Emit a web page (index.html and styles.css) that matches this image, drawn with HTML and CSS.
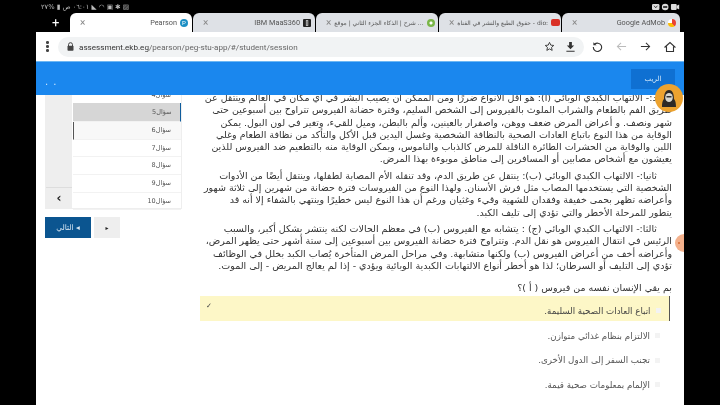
FILE: index.html
```html
<!DOCTYPE html>
<html lang="ar">
<head>
<meta charset="utf-8">
<title>Pearson</title>
<link rel="stylesheet" href="styles.css">
</head>
<body>
<div class="screen">
  <div class="statusbar">
    <span class="status-left">٠٦:٠١ ص ▮ %٢٧ ◣ ◠ ▣ ✱ ▨</span>
    <span class="status-right">
      <svg width="28" height="8" viewBox="0 0 34 9"><rect x="0" y="1" width="9" height="7" rx="1.500" fill="#ddd"/><path d="M2.500 3l2 2.500 2-2.500" fill="none" stroke="#222"/><circle cx="16" cy="4.500" r="4" fill="#ddd"/><rect x="13.500" y="3.500" width="5" height="2" fill="#222"/><rect x="23" y="1" width="7" height="7" rx="1" fill="#ddd"/><path d="M30 3l3-1.500v6l-3-1.500z" fill="#ddd"/></svg>
    </span>
  </div>
  <div class="tabstrip">
    <span class="newtab">+</span>
    <div class="tab tab-active">
      <span class="tab-x">×</span>
      <span class="tab-title">Pearson</span>
      <span class="fav fav-p">P</span>
    </div>
    <div class="tab">
      <span class="tab-x">×</span>
      <span class="tab-title">IBM MaaS360</span>
      <span class="fav fav-ibm">[]</span>
    </div>
    <div class="tab">
      <span class="tab-x">×</span>
      <span class="tab-title tab-ar">شرح | الذكاء الجزء الثاني | موقع ...</span>
      <span class="fav fav-green"></span>
    </div>
    <div class="tab">
      <span class="tab-x">×</span>
      <span class="tab-title tab-ar">حقوق الطبع والنشر في القناة - dio:</span>
      <span class="fav fav-yt"></span>
    </div>
    <div class="tab tab-last">
      <span class="tab-x">×</span>
      <span class="tab-title">Google AdMob</span>
      <span class="fav fav-admob"></span>
    </div>
  </div>
  <div class="frame">
    <div class="toolbar">
      <span class="menu-dots"><i></i><i></i><i></i></span>
      <div class="omnibox">
        <svg class="lock" width="7" height="9" viewBox="0 0 7 9"><path d="M1.500 4V2.700a2 2 0 0 1 4 0V4" fill="none" stroke="#444" stroke-width="1"/><rect x="0.500" y="3.800" width="6" height="5" rx="0.800" fill="#444"/></svg>
        <span class="url"><b>assessment.ekb.eg</b>/pearson/peg-stu-app/#/student/session</span>
        <svg class="omni-icon" width="11" height="11" viewBox="0 0 24 24"><path d="M12 3l2.800 6 6.500.7-4.900 4.400 1.400 6.400L12 17.200 6.200 20.500l1.400-6.400L2.700 9.700 9.200 9z" fill="none" stroke="#333" stroke-width="2"/></svg>
        <svg class="omni-icon" width="11" height="11" viewBox="0 0 24 24"><path d="M9 2h6v8h5l-8 8-8-8h5zM3 21h18v2.500H3z" fill="#333"/></svg>
      </div>
      <svg class="tool reload" width="11" height="11" viewBox="0 0 24 24"><path d="M5.500 7.500A9 9 0 1 1 3 13" fill="none" stroke="#333" stroke-width="2.400"/><path d="M3 2.500v7h7z" fill="#333"/></svg>
      <svg class="tool" width="11" height="11" viewBox="0 0 24 24"><path d="M22 12H3M11 4l-8 8 8 8" fill="none" stroke="#bbb" stroke-width="2.200"/></svg>
      <svg class="tool" width="11" height="11" viewBox="0 0 24 24"><path d="M2 12h19M13 4l8 8-8 8" fill="none" stroke="#333" stroke-width="2.200"/></svg>
      <svg class="tool" width="12" height="12" viewBox="0 0 24 24"><path d="M2 12L12 3l10 9h-3v9H5v-9z" fill="none" stroke="#333" stroke-width="2.200"/></svg>
    </div>
    <header class="topbar">
      <span class="dots">. .</span>
      <span class="rank-btn">الريب</span>
    </header>
    <div class="avatar">
      <svg width="28" height="28" viewBox="0 0 28 28"><circle cx="14" cy="14" r="14" fill="#eda32f"/><path d="M7 23c0-5 1-7 2-8 0-6 2-9 5-9s5 3 5 9c1 1 2 3 2 8z" fill="#2e2a26"/><ellipse cx="14" cy="13.500" rx="3.800" ry="4.600" fill="#d8d8d0"/><rect x="11.500" y="12" width="5" height="1.500" fill="#333"/></svg>
    </div>
    <span class="side-tab"><i></i></span>
    <main class="content">
      <aside class="qnav">
        <div class="qbox">
          <div class="qside"><span class="chev">‹</span></div>
          <ol class="qlist">
            <li class="qitem qitem-cut">سؤال4</li>
            <li class="qitem qitem-on">سؤال5</li>
            <li class="qitem qitem-next">سؤال6</li>
            <li class="qitem">سؤال7</li>
            <li class="qitem">سؤال8</li>
            <li class="qitem">سؤال9</li>
            <li class="qitem">سؤال10</li>
          </ol>
        </div>
        <div class="qbtns">
          <span class="btn-next">التالي ◂</span>
          <span class="btn-prev">▸</span>
        </div>
      </aside>
      <article class="reading" dir="rtl">
        <p>وجود:- الالتهاب الكبدي الوبائي (أ): هو أقل الأنواع ضررًا ومن الممكن أن يصيب البشر في أي مكان في العالم وينتقل عن<br>
        طريق الفم بالطعام والشراب الملوث بالفيروس إلى الشخص السليم، وفترة حضانة الفيروس تتراوح بين أسبوعين حتى<br>
        شهر ونصف. و أعراض المرض ضعف ووهن، واصفرار بالعينين، وألم بالبطن، وميل للقيء، وتغير في لون البول. يمكن<br>
        الوقاية من هذا النوع باتباع العادات الصحية بالنظافة الشخصية وغسل اليدين قبل الأكل والتأكد من نظافة الطعام وغلي<br>
        اللبن والوقاية من الحشرات الطائرة الناقلة للمرض كالذباب والناموس، ويمكن الوقاية منه بالتطعيم ضد الفيروس للذين<br>
        يعيشون مع أشخاص مصابين أو المسافرين إلى مناطق موبوءة بهذا المرض.</p>
        <p class="para para2"><span class="lead"></span>ثانيا:- الالتهاب الكبدي الوبائي (ب): ينتقل عن طريق الدم، وقد تنقله الأم المصابة لطفلها، وينتقل أيضًا من الأدوات<br>
        الشخصية التي يستخدمها المصاب مثل فرش الأسنان. ولهذا النوع من الفيروسات فترة حضانة من شهرين إلى ثلاثة شهور<br>
        وأعراضه تظهر بحمى خفيفة وفقدان للشهية وقيء وغثيان ورغم أن هذا النوع ليس خطيرًا وينتهي بالشفاء إلا أنه قد<br>
        يتطور للمرحلة الأخطر والتي تؤدي إلى تليف الكبد.</p>
        <p class="para para3"><span class="lead"></span>ثالثا:- الالتهاب الكبدي الوبائي (ج) : يتشابه مع الفيروس (ب) في معظم الحالات لكنه ينتشر بشكل أكبر، والسبب<br>
        الرئيس في انتقال الفيروس هو نقل الدم. وتتراوح فترة حضانة الفيروس بين أسبوعين إلى ستة أشهر حتى يظهر المرض،<br>
        وأعراضه أخف من أعراض الفيروس (ب) ولكنها متشابهة. وفي مراحل المرض المتأخرة يُصاب الكبد بخلل في الوظائف<br>
        تؤدي إلى التليف أو السرطان؛ لذا هو أخطر أنواع الالتهابات الكبدية الوبائية ويؤدي - إذا لم يعالج المريض - إلى الموت.</p>
        <p class="para question">بم يقي الإنسان نفسه من فيروس ( أ )؟</p>
        <ul class="options">
          <li class="option option-on"><span class="radio"></span><span>اتباع العادات الصحية السليمة.</span><span class="tick">✓</span></li>
          <li class="option"><span class="radio"></span><span>الالتزام بنظام غذائي متوازن.</span></li>
          <li class="option"><span class="radio"></span><span>تجنب السفر إلى الدول الأخرى.</span></li>
          <li class="option"><span class="radio"></span><span>الإلمام بمعلومات صحية قيمة.</span></li>
        </ul>
      </article>
    </main>
  </div>
</div>
</body>
</html>
```
FILE: styles.css
```css
* { box-sizing: border-box; }
html, body { margin: 0; height: 100%; background: #000; overflow: hidden; }
.screen { width: 720px; height: 405px; background: #000; filter: blur(0.35px); overflow: hidden; font-family: "DejaVu Sans", sans-serif; }

.statusbar { height: 13px; display: flex; justify-content: space-between; align-items: center; padding: 0 40px 0 41px; color: #bbb; font-size: 6.700px; }
.status-right { display: flex; }

.tabstrip { height: 19px; display: flex; align-items: stretch; padding: 0 40px 0 52px; font-family: Roboto, sans-serif; font-size: 7.300px; color: #555; }
.newtab { width: 18px; color: #fff; font-size: 13px; line-height: 19px; }
.tab { width: 122px; margin-right: 1px; background: #dee1e6; border-radius: 6px 6px 0 0; display: flex; align-items: center; padding: 0 4px 0 10px; gap: 3px; }
.tab-active { background: #fff; }
.tab-last { flex: 1; margin-right: 0; }
.tab-x { font-size: 10px; color: #888; margin-right: auto; }
.tab-title { white-space: nowrap; }
.tab-ar { font-family: "DejaVu Sans", sans-serif; font-size: 6px; }
.fav { width: 8px; height: 8px; border-radius: 50%; flex: none; font-size: 6px; line-height: 8px; text-align: center; color: #fff; }
.fav-p { background: #1c8fc4; }
.fav-ibm { background: #222; border-radius: 1px; }
.fav-green { background: radial-gradient(circle, #fff 25%, #7ab648 30%); }
.fav-yt { width: 9px; height: 7px; border-radius: 2px; background: #d93025; }
.fav-admob { background: conic-gradient(#ea4335 0 40%, #fbbc04 40% 75%, #fff 75%); }

.frame { position: relative; width: 648px; height: 373px; margin-left: 36px; background: #fff; overflow: hidden; }

.toolbar { height: 29px; display: flex; align-items: center; padding: 0 8px 0 10px; background: #fff; }
.menu-dots { display: flex; flex-direction: column; gap: 1.500px; width: 12px; flex: none; }
.menu-dots i { width: 2.500px; height: 2.500px; background: #444; border-radius: 50%; }
.omnibox { width: 526px; flex: none; height: 20px; background: #f1f3f4; border-radius: 10px; display: flex; align-items: center; padding: 0 8px 0 9px; }
.lock { margin-right: 5px; }
.url { font-family: Roboto, sans-serif; font-size: 8.100px; color: #666; margin-right: auto; white-space: nowrap; }
.url b { color: #333; font-weight: 400; }
.omni-icon { margin-left: 10px; }
.tool { margin-left: 13px; flex: none; }
.reload { margin-left: 8px; }

.topbar { height: 34px; background: #1a87ee; border-top: 1px solid #6db7f3; display: flex; justify-content: space-between; align-items: center; padding: 0 9px 0 9px; position: relative; z-index: 1; }
.dots { color: #cfe6fb; font-size: 10px; letter-spacing: 1px; padding-top: 6px; }
.rank-btn { width: 44px; height: 20px; background: #0f70d2; color: #d8ebfb; font-size: 7px; display: flex; align-items: center; justify-content: center; }

.avatar { position: absolute; right: 0; top: 52px; width: 28px; height: 28px; z-index: 2; margin-right: 1px; }
.side-tab { position: absolute; right: -9px; top: 202px; width: 18px; height: 18px; border-radius: 50%; background: #f4b18c; }
.side-tab i { position: absolute; left: 3px; top: 8px; width: 2px; height: 2px; background: #d86a30; border-radius: 50%; }

.content { display: flex; align-items: flex-start; padding: 0 12px 0 9px; }

.qnav { width: 137px; flex: none; direction: ltr; }
.qbox { height: 114px; display: flex; border: 1px solid #eee; border-top: 0; }
.qside { width: 26px; background: #eee; margin-right: 1px; display: flex; align-items: flex-end; }
.chev { width: 100%; height: 21px; line-height: 20px; text-align: center; font-size: 12px; font-weight: 700; color: #222; border-top: 1px solid #ddd; }
.qlist { flex: 1; list-style: none; margin: 0; padding: 0; font-size: 6.500px; color: #555; direction: rtl; }
.qitem { height: 17.700px; line-height: 17.700px; padding-right: 10px; border-bottom: 1px solid #f2f2f2; }
.qitem-cut { height: 8px; line-height: 0; border: 0; }
.qitem-on { height: 19px; line-height: 18px; background: #d6d6d6; border-right: 1.500px solid #0f5c9c; padding-right: 8.500px; }
.qitem-next { background: #f8f8f8; border-left: 1px solid #555; }
.qbtns { display: flex; gap: 3px; margin-top: 8px; }
.btn-next { width: 46px; height: 21px; background: #0b5590; color: #d7e6f3; font-size: 7.500px; display: flex; align-items: center; justify-content: center; }
.btn-prev { width: 26px; height: 21px; background: #eee; color: #222; font-size: 6px; display: flex; align-items: center; justify-content: center; }

.reading { flex: 1; min-width: 0; margin: -3px 0 0 18px; font-size: 9.500px; line-height: 12.300px; color: #333; text-align: right; white-space: nowrap; }
.reading p { margin: 0; }
.lead { display: inline-block; width: 15px; }
.reading .para2 { margin-top: 4px; }
.reading .para3 { margin-top: 4px; }
.reading .question { margin-top: 10px; }

.options { list-style: none; margin: 2px 2px 0 0; padding: 0; font-size: 8.700px; color: #555; }
.option { height: 24.500px; display: flex; align-items: center; padding: 4px 10px 0 6px; gap: 5px; }
.option-on { height: 25px; background: #fdf7c7; color: #444; border-right: 1.500px solid #555; padding-right: 8.500px; }
.radio { width: 5px; height: 5px; background: #f3f3f3; flex: none; }
.tick { margin-right: auto; font-size: 7px; color: #444; margin-top: -10px; }
```
